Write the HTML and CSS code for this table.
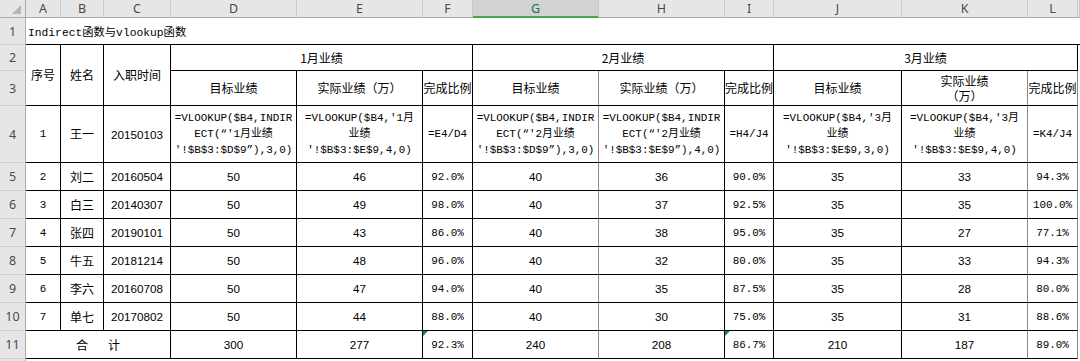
FILE: index.html
```html
<!DOCTYPE html>
<html lang="zh-CN">
<head>
<meta charset="utf-8">
<title>Indirect函数与vlookup函数</title>
<link rel="stylesheet" href="styles.css">
</head>
<body>
<div class="sheet">
  <div class="hd corner"><span class="tri"></span></div>
  <div class="hd">A</div>
  <div class="hd">B</div>
  <div class="hd">C</div>
  <div class="hd">D</div>
  <div class="hd">E</div>
  <div class="hd">F</div>
  <div class="hd sel">G</div>
  <div class="hd">H</div>
  <div class="hd">I</div>
  <div class="hd">J</div>
  <div class="hd">K</div>
  <div class="hd">L</div>
  <div class="hd"></div>

  <div class="rh">1</div>
  <div class="title mono">Indirect函数与vlookup函数</div>
  <div class="m top"></div>

  <div class="rh">2</div>
  <div class="c r2 zh">序号</div>
  <div class="c r2 zh">姓名</div>
  <div class="c r2 zh">入职时间</div>
  <div class="c s3 zh">1月业绩</div>
  <div class="c s3 zh">2月业绩</div>
  <div class="c s3 zh">3月业绩</div>
  <div class="m"></div>

  <div class="rh">3</div>
  <div class="c zh">目标业绩</div>
  <div class="c zh">实际业绩（万）</div>
  <div class="c zh">完成比例</div>
  <div class="c zh g">目标业绩</div>
  <div class="c zh">实际业绩（万）</div>
  <div class="c zh">完成比例</div>
  <div class="c zh">目标业绩</div>
  <div class="c zh g two">实际业绩<br>（万）</div>
  <div class="c zh g">完成比例</div>
  <div class="m"></div>

  <div class="rh">4</div>
  <div class="c mono">1</div>
  <div class="c zh">王一</div>
  <div class="c num">20150103</div>
  <div class="c mono f">=VLOOKUP($B4,INDIR<br>ECT(“'1月业绩<br>'!$B$3:$D$9”),3,0)</div>
  <div class="c mono f">=VLOOKUP($B4,'1月<br>业绩<br>'!$B$3:$E$9,4,0)</div>
  <div class="c mono">=E4/D4</div>
  <div class="c mono f g">=VLOOKUP($B4,INDIR<br>ECT(“'2月业绩<br>'!$B$3:$D$9”),3,0)</div>
  <div class="c mono f">=VLOOKUP($B4,INDIR<br>ECT(“'2月业绩<br>'!$B$3:$E$9”),4,0)</div>
  <div class="c mono">=H4/J4</div>
  <div class="c mono f">=VLOOKUP($B4,'3月<br>业绩<br>'!$B$3:$E$9,3,0)</div>
  <div class="c mono f g">=VLOOKUP($B4,'3月<br>业绩<br>'!$B$3:$E$9,4,0)</div>
  <div class="c mono g">=K4/J4</div>
  <div class="m"></div>

  <div class="rh">5</div>
  <div class="c mono">2</div>
  <div class="c zh">刘二</div>
  <div class="c num">20160504</div>
  <div class="c num">50</div>
  <div class="c num">46</div>
  <div class="c mono">92.0%</div>
  <div class="c num g">40</div>
  <div class="c num">36</div>
  <div class="c mono">90.0%</div>
  <div class="c num">35</div>
  <div class="c num g">33</div>
  <div class="c mono g">94.3%</div>
  <div class="m"></div>

  <div class="rh">6</div>
  <div class="c mono">3</div>
  <div class="c zh">白三</div>
  <div class="c num">20140307</div>
  <div class="c num">50</div>
  <div class="c num">49</div>
  <div class="c mono">98.0%</div>
  <div class="c num g">40</div>
  <div class="c num">37</div>
  <div class="c mono">92.5%</div>
  <div class="c num">35</div>
  <div class="c num g">35</div>
  <div class="c mono g">100.0%</div>
  <div class="m"></div>

  <div class="rh">7</div>
  <div class="c mono">4</div>
  <div class="c zh">张四</div>
  <div class="c num">20190101</div>
  <div class="c num">50</div>
  <div class="c num">43</div>
  <div class="c mono">86.0%</div>
  <div class="c num g">40</div>
  <div class="c num">38</div>
  <div class="c mono">95.0%</div>
  <div class="c num">35</div>
  <div class="c num g">27</div>
  <div class="c mono g">77.1%</div>
  <div class="m"></div>

  <div class="rh">8</div>
  <div class="c mono">5</div>
  <div class="c zh">牛五</div>
  <div class="c num">20181214</div>
  <div class="c num">50</div>
  <div class="c num">48</div>
  <div class="c mono">96.0%</div>
  <div class="c num g">40</div>
  <div class="c num">32</div>
  <div class="c mono">80.0%</div>
  <div class="c num">35</div>
  <div class="c num g">33</div>
  <div class="c mono g">94.3%</div>
  <div class="m"></div>

  <div class="rh">9</div>
  <div class="c mono">6</div>
  <div class="c zh">李六</div>
  <div class="c num">20160708</div>
  <div class="c num">50</div>
  <div class="c num">47</div>
  <div class="c mono">94.0%</div>
  <div class="c num g">40</div>
  <div class="c num">35</div>
  <div class="c mono">87.5%</div>
  <div class="c num">35</div>
  <div class="c num g">28</div>
  <div class="c mono g">80.0%</div>
  <div class="m"></div>

  <div class="rh">10</div>
  <div class="c mono">7</div>
  <div class="c zh">单七</div>
  <div class="c num">20170802</div>
  <div class="c num">50</div>
  <div class="c num">44</div>
  <div class="c mono">88.0%</div>
  <div class="c num g">40</div>
  <div class="c num">30</div>
  <div class="c mono">75.0%</div>
  <div class="c num">35</div>
  <div class="c num g">31</div>
  <div class="c mono g">88.6%</div>
  <div class="m"></div>

  <div class="rh">11</div>
  <div class="c s3 zh total"><span>合</span><span>计</span></div>
  <div class="c num">300</div>
  <div class="c num">277</div>
  <div class="c mono err">92.3%</div>
  <div class="c num g">240</div>
  <div class="c num">208</div>
  <div class="c mono err">86.7%</div>
  <div class="c num">210</div>
  <div class="c num g">187</div>
  <div class="c mono g">89.0%</div>
  <div class="m"></div>

  <div class="rh last">12</div>
  <div class="rest"></div>
</div>
</body>
</html>
```

FILE: styles.css
```css
html, body {
  margin: 0;
  padding: 0;
  background: #ffffff;
  overflow: hidden;
}

.sheet {
  display: grid;
  grid-template-columns: 26px 35px 43px 67px 126px 126px 50px 126px 126px 49px 128px 126px 50px 2px;
  grid-template-rows: 18px 27px 26px 35px 57px repeat(7, 28px) 2px;
  width: 1080px;
  height: 361px;
  color: #000;
}

.hd {
  background: #e6e6e6;
  border-right: 1px solid #c9c9c9;
  border-bottom: 1px solid #ababab;
  box-sizing: border-box;
  font-family: "Noto Sans", "Liberation Sans", sans-serif;
  font-size: 12.5px;
  line-height: 17px;
  color: #4a4a4a;
  text-align: center;
  overflow: hidden;
}

.hd.sel {
  background: #d2d2d2;
  color: #217346;
  border-bottom: 2px solid #4aa64f;
}

.corner {
  position: relative;
  border-right-color: #ababab;
}

.corner .tri {
  position: absolute;
  right: 4px;
  bottom: 3px;
  width: 0;
  height: 0;
  border-left: 9px solid transparent;
  border-bottom: 9px solid #b5b5b5;
}

.rh {
  background: #e6e6e6;
  border-right: 1px solid #ababab;
  border-bottom: 1px solid #d0d0d0;
  box-sizing: border-box;
  font-family: "Noto Sans", "Liberation Sans", sans-serif;
  font-size: 12.5px;
  color: #4a4a4a;
  display: flex;
  align-items: center;
  justify-content: center;
  overflow: hidden;
}

.rh.last {
  align-items: flex-start;
  line-height: 14px;
  border-bottom: 0;
}

.title {
  grid-column: span 12;
  border-bottom: 1px solid #000;
  box-sizing: border-box;
  display: flex;
  align-items: center;
  padding-left: 2px;
  white-space: nowrap;
}

.title.mono {
  font-size: 11.3px;
}

.m {
  background: #fff;
}

.m.top {
  border-bottom: 1px solid #000;
  box-sizing: border-box;
}

.rest {
  grid-column: span 13;
  background: #fff;
}

.c {
  box-sizing: border-box;
  border-right: 1px solid #000;
  border-bottom: 1px solid #000;
  display: flex;
  align-items: center;
  justify-content: center;
  text-align: center;
  white-space: nowrap;
  overflow: visible;
}

.c.g {
  border-right-color: #8a8a8a;
}

.r2 {
  grid-row: span 2;
}

.s3 {
  grid-column: span 3;
}

.zh {
  font-family: "Noto Sans CJK SC", "Noto Sans", sans-serif;
  font-size: 12px;
  line-height: 16px;
}

.two {
  line-height: 15px;
}

.num {
  font-family: "Liberation Sans", Arial, sans-serif;
  font-size: 11.7px;
}

.mono {
  font-family: "Liberation Mono", "Noto Sans CJK SC", monospace;
  font-size: 10.9px;
}

.f {
  line-height: 16px;
}

.total {
  gap: 20px;
}

.err {
  position: relative;
}

.err::before {
  content: "";
  position: absolute;
  left: 0;
  top: 0;
  width: 0;
  height: 0;
  border-top: 5px solid #1e8a3a;
  border-right: 5px solid transparent;
}
```
